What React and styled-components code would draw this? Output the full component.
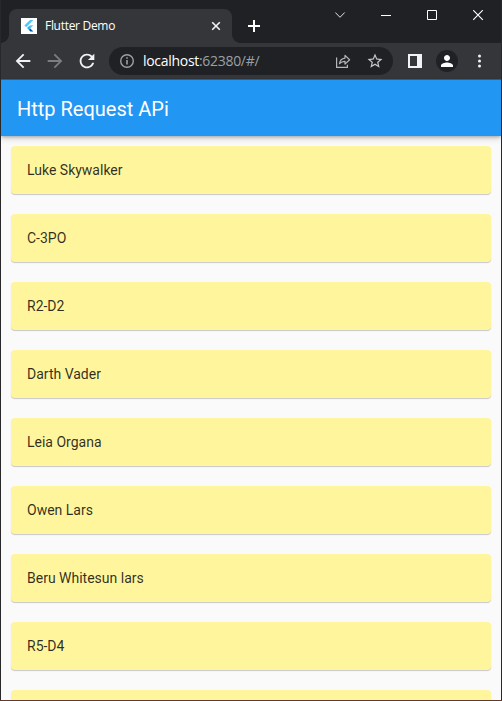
import React from "react";
import styled, { createGlobalStyle } from "styled-components";

const GlobalStyle = createGlobalStyle`
  * { box-sizing: border-box; }
  body { margin: 0; background: #28282b; overflow: hidden; }
`;

const Desktop = styled.div`
  width: 502px;
  height: 701px;
  padding: 0 1px 1px;
  background: linear-gradient(#63392a, #63392a) bottom / 100% 1px no-repeat, #28282b;
`;

const BrowserWindow = styled.div`
  height: 700px;
  display: flex;
  flex-direction: column;
  overflow: hidden;
  background: #fafafa;
`;

const TitleBar = styled.header`
  height: 43px;
  flex: none;
  display: flex;
  align-items: flex-start;
  background: #202124;
`;

const Tab = styled.div`
  width: 223px;
  height: 34px;
  margin: 9px 0 0 8px;
  padding: 0 11px 0 12px;
  display: flex;
  align-items: center;
  border-radius: 8px 8px 0 0;
  background: #35363a;
  position: relative;

  &::before,
  &::after {
    content: "";
    position: absolute;
    bottom: 0;
    width: 8px;
    height: 8px;
  }
  &::before {
    left: -8px;
    background: radial-gradient(circle at 0 0, transparent 7.5px, #35363a 8px);
  }
  &::after {
    right: -8px;
    background: radial-gradient(circle at 100% 0, transparent 7.5px, #35363a 8px);
  }
`;

const TabTitle = styled.span`
  flex: 1;
  margin-left: 8px;
  color: #fff;
  font: 12px/16px "Open Sans", "Noto Sans", sans-serif;
  letter-spacing: -0.3px;
  white-space: nowrap;
`;

const Icon = styled.svg`
  display: block;
  flex: none;
  width: ${(p) => p.$w}px;
  height: ${(p) => p.$h || p.$w}px;
  fill: ${(p) => p.$fill || "none"};
  stroke: ${(p) => p.$stroke || "none"};
`;

const NewTab = styled.div`
  margin: 20px 0 0 16px;
`;

const WindowControls = styled.div`
  margin: 10px 17px 0 auto;
  display: flex;
  gap: 35px;
`;

const Toolbar = styled.nav`
  height: 37px;
  flex: none;
  display: flex;
  align-items: center;
  background: #35363a;
  border-bottom: 1px solid #58595c;
`;

const NavButtons = styled.div`
  width: 108px;
  padding-left: 11px;
  display: flex;
  gap: 10px;
`;

const AddressBar = styled.div`
  width: 284px;
  height: 28px;
  padding: 0 9px;
  display: flex;
  align-items: center;
  border-radius: 14px;
  background: #202124;
`;

const Address = styled.span`
  flex: 1;
  margin-left: 7px;
  color: #9aa0a6;
  font: 14px/20px "Open Sans", "Noto Sans", sans-serif;
  letter-spacing: -0.3px;
  white-space: nowrap;
`;

const Host = styled.span`
  color: #fff;
`;

const AddressActions = styled.div`
  display: flex;
  align-items: center;
  gap: 15px;
`;

const ToolbarActions = styled.div`
  margin-left: 15px;
  display: flex;
  align-items: center;
`;

const Avatar = styled.div`
  width: 22px;
  height: 22px;
  margin: 0 20px 0 14px;
  display: grid;
  place-items: center;
  border-radius: 50%;
  background: #202124;
`;

const AppBar = styled.div`
  height: 56px;
  flex: none;
  display: flex;
  align-items: center;
  padding: 2px 16px 0;
  background: #2196f3;
  box-shadow: 0 1px 3px rgba(0, 0, 0, 0.24), 0 3px 6px rgba(0, 0, 0, 0.14);
  z-index: 1;
`;

const AppTitle = styled.h1`
  margin: 0;
  color: #fff;
  font: 400 20px/24px Roboto, sans-serif;
`;

const List = styled.ul`
  flex: 1;
  min-height: 0;
  margin: 0;
  padding: 10px;
  display: flex;
  flex-direction: column;
  gap: 20px;
  list-style: none;
  overflow: hidden;
`;

const Card = styled.li`
  height: 48px;
  flex: none;
  padding: 0 16px;
  border-radius: 4px;
  background: #fff59d;
  box-shadow: 0 1px 1px rgba(0, 0, 0, 0.2);
  color: rgba(0, 0, 0, 0.82);
  font: 400 14px/48px Roboto, sans-serif;
`;

const people = [
  "Luke Skywalker",
  "C-3PO",
  "R2-D2",
  "Darth Vader",
  "Leia Organa",
  "Owen Lars",
  "Beru Whitesun lars",
  "R5-D4",
  "",
];

const FlutterLogo = () => (
  <Icon $w={16} viewBox="0 0 16 16">
    <rect width="16" height="16" fill="#fff" />
    <path d="M9 2H12.4L5.1 9.3L3.4 7.6Z" fill="#54c5f8" />
    <path d="M9 7.2H12.4L7.9 11.7L6.2 10Z" fill="#54c5f8" />
    <path d="M7.9 11.7L9.2 10.4L12.4 13.6H9.2Z" fill="#01579b" />
    <path d="M6.2 10L7.9 8.3L9.6 10L7.9 11.7Z" fill="#29b6f6" />
  </Icon>
);

export default function App() {
  return (
    <>
      <GlobalStyle />
      <Desktop>
        <BrowserWindow>
          <TitleBar>
            <Tab>
              <FlutterLogo />
              <TabTitle>Flutter Demo</TabTitle>
              <Icon $w={10} viewBox="0 0 10 10" $stroke="#f1f3f4" strokeWidth="1.6">
                <path d="M1.2 1.2L8.8 8.8M8.8 1.2L1.2 8.8" />
              </Icon>
            </Tab>
            <NewTab>
              <Icon $w={12} viewBox="0 0 12 12" $stroke="#fff" strokeWidth="2">
                <path d="M6 0V12M0 6H12" />
              </Icon>
            </NewTab>
            <WindowControls>
              <Icon $w={11} viewBox="0 0 11 11" $stroke="#e4e5e6">
                <path d="M0.3 2.5L5 7.3L9.7 2.5" />
              </Icon>
              <Icon $w={11} viewBox="0 0 11 11" $stroke="#fff">
                <path d="M0 5.5H10" />
              </Icon>
              <Icon $w={11} viewBox="0 0 11 11" $stroke="#fff">
                <path d="M0.5 0.5H9.5V9.5H0.5Z" />
              </Icon>
              <Icon $w={11} viewBox="0 0 11 11" $stroke="#fff" strokeWidth="1.15">
                <path d="M0.2 0.2L9.8 9.8M9.8 0.2L0.2 9.8" />
              </Icon>
            </WindowControls>
          </TitleBar>

          <Toolbar>
            <NavButtons>
              <Icon $w={22} viewBox="0 0 24 24" $fill="#f1f3f4">
                <path d="M20 11H7.83l5.59-5.59L12 4l-8 8 8 8 1.41-1.41L7.83 13H20v-2z" />
              </Icon>
              <Icon $w={22} viewBox="0 0 24 24" $fill="#7c7d80">
                <path d="M12 4l-1.41 1.41L16.17 11H4v2h12.17l-5.58 5.59L12 20l8-8z" />
              </Icon>
              <Icon $w={22} viewBox="0 0 24 24" $fill="#f1f3f4">
                <path d="M17.65 6.35C16.2 4.9 14.21 4 12 4c-4.42 0-7.99 3.58-7.99 8s3.57 8 7.99 8c3.73 0 6.84-2.55 7.73-6h-2.08c-.82 2.33-3.04 4-5.65 4-3.31 0-6-2.69-6-6s2.69-6 6-6c1.66 0 3.14.69 4.22 1.78L13 11h7V4l-2.35 2.35z" />
              </Icon>
            </NavButtons>
            <AddressBar>
              <Icon $w={18} viewBox="0 0 18 18" $stroke="#9aa0a6" strokeWidth="1.4">
                <circle cx="9" cy="9" r="6.3" />
                <path d="M9 8V12.5M9 5.2V6.8" strokeWidth="1.6" />
              </Icon>
              <Address>
                <Host>localhost</Host>:62380/#/
              </Address>
              <AddressActions>
                <Icon $w={16} viewBox="0 0 16 16" $stroke="#b4b7ba" strokeWidth="1.2">
                  <path d="M1.6 4.5V14.4H12.4V11.8" />
                  <path d="M4.5 10.7C4.9 7.4 6.8 5.5 10 5.1V2.4L14.6 6.8L10 11.1V8.3C7.8 8.2 6 9 4.5 10.7Z" strokeLinejoin="round" />
                </Icon>
                <Icon $w={18} viewBox="0 0 24 24" $fill="#c6c9cc">
                  <path d="M22 9.24l-7.19-.62L12 2 9.19 8.63 2 9.24l5.46 4.73L5.82 21 12 17.27 18.18 21l-1.63-7.03L22 9.24zM12 15.4l-3.76 2.27 1-4.28-3.32-2.88 4.38-.38L12 6.1l1.71 4.04 4.38.38-3.32 2.88 1 4.28L12 15.4z" />
                </Icon>
              </AddressActions>
            </AddressBar>
            <ToolbarActions>
              <Icon $w={14} viewBox="0 0 14 14" $fill="#f1f3f4" fillRule="evenodd">
                <path d="M0 0H14V14H0ZM2 2V12H9V2Z" />
              </Icon>
              <Avatar>
                <Icon $w={18} viewBox="0 0 24 24" $fill="#fff">
                  <path d="M12 12c2.21 0 4-1.79 4-4s-1.79-4-4-4-4 1.79-4 4 1.79 4 4 4zm0 2c-2.67 0-8 1.34-8 4v2h16v-2c0-2.66-5.33-4-8-4z" />
                </Icon>
              </Avatar>
              <Icon $w={3} $h={14} viewBox="0 0 3 14" $fill="#f1f3f4">
                <circle cx="1.5" cy="2" r="1.5" />
                <circle cx="1.5" cy="7" r="1.5" />
                <circle cx="1.5" cy="12" r="1.5" />
              </Icon>
            </ToolbarActions>
          </Toolbar>

          <AppBar>
            <AppTitle>Http Request APi</AppTitle>
          </AppBar>
          <List>
            {people.map((name, i) => (
              <Card key={i}>{name}</Card>
            ))}
          </List>
        </BrowserWindow>
      </Desktop>
    </>
  );
}
